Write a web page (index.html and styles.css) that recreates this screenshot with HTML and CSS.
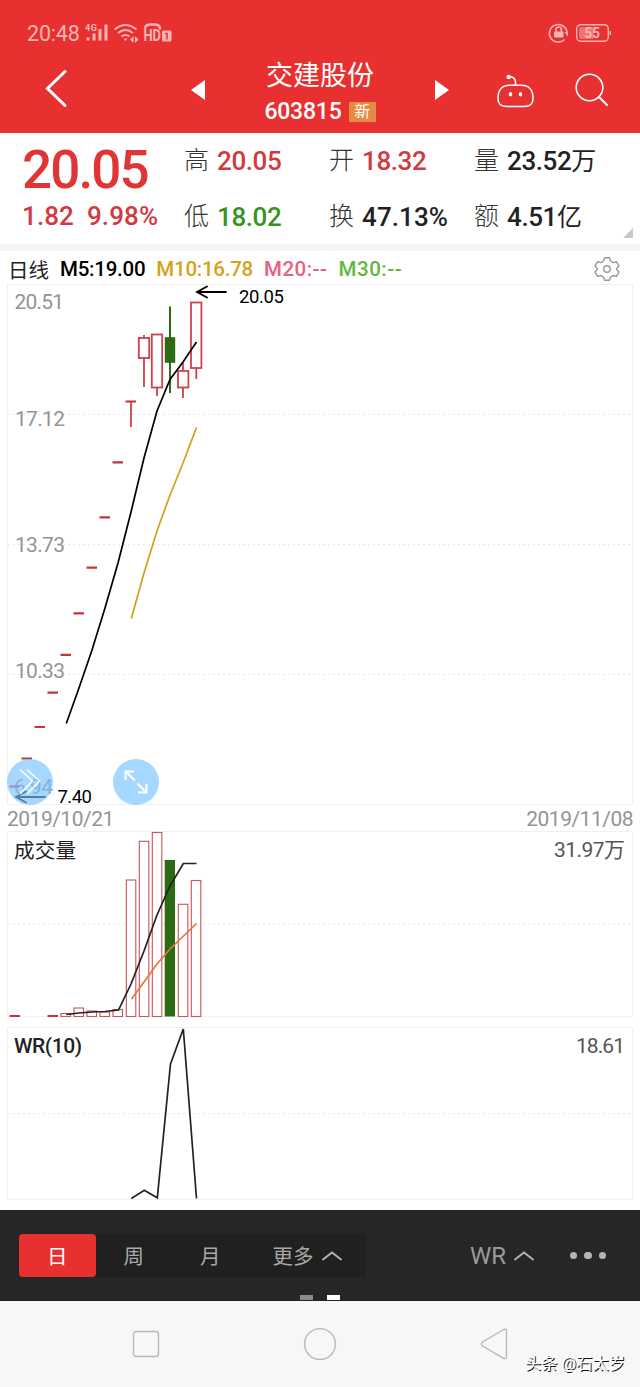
FILE: index.html
```html
<!DOCTYPE html>
<html lang="zh-CN">
<head>
    <meta charset="UTF-8">
    <meta name="viewport" content="width=device-width, initial-scale=1.0">
    <title>交建股份 603815</title>
    <link rel="stylesheet" href="styles.css">
</head>
<body>
<header class="header">
    <div class="status">
        <span class="clock">20:48</span>
        <svg class="signals" width="88" height="22" viewBox="85 22 88 22">
            <text class="sig-4g" x="85" y="30.5" textLength="12">4G</text>
            <path d="M88 37.5v3M94 33.5v7M100 29v11.500M106 24.500v16" stroke="#f9b5b1" stroke-width="3"/>
            <g fill="none" stroke="#f9b5b1" stroke-width="2">
                <path d="M114.500 29.500q11-9 22 0M118 33q7.500-6 15 0M121.500 36.500q4-3 8 0"/>
                <path d="M145 29.500v-1q0-4 6-4h3q6 0 6 4v1" stroke-width="2.400"/>
            </g>
            <path d="M123.500 38.500h4l-2 2.500zM133.500 36v7l-3.500-3.500zM135 36v7l3.500-3.500z" fill="#f9b5b1"/>
            <text class="sig-hd" x="143.500" y="41" textLength="17.500" lengthAdjust="spacingAndGlyphs">HD</text>
            <rect x="162" y="30.500" width="9.500" height="11" rx="1.500" fill="#f9b5b1"/>
            <path d="M165 33.500h2v6" fill="none" stroke="#e93030" stroke-width="1.500"/>
        </svg>
        <svg class="battery" width="66" height="22" viewBox="547 22 66 22">
            <path d="M564.500 39.500a8.800 8.800 0 1 1 2.500-5.500" fill="none" stroke="#f9b5b1" stroke-width="1.600"/>
            <path d="M564.500 32.500l3.500-1v5z" fill="#f9b5b1"/>
            <rect x="554" y="31.500" width="9.500" height="6" rx="1" fill="#f9b5b1"/>
            <path d="M556 32v-2.500q0-2.500 2.700-2.500t2.700 2.500v2.500" fill="none" stroke="#f9b5b1" stroke-width="1.600"/>
            <rect x="576.700" y="24.700" width="31.600" height="16.600" rx="4" fill="none" stroke="#f9b5b1" stroke-width="1.400"/>
            <rect x="579" y="27" width="15" height="12" rx="2" fill="#ef7471"/>
            <path d="M609.500 31h1.500v4h-1.500z" fill="#f9b5b1"/>
            <text class="sig-pct" x="584.500" y="38" textLength="15.500" lengthAdjust="spacingAndGlyphs">55</text>
        </svg>
    </div>
    <div class="titlebar">
        <svg class="back" width="24" height="40" viewBox="44 69 24 40">
            <path d="M65 71.500L47.500 88.500L65 105.500" fill="none" stroke="#fff" stroke-width="3" stroke-linecap="round"/>
        </svg>
        <svg class="prev" width="14" height="20" viewBox="0 0 14 20"><path d="M14 0v20L0 10z" fill="#fff"/></svg>
        <div class="stock">
            <h1 class="stock-name">交建股份</h1>
            <div class="stock-code"><span>603815</span><em class="tag">新</em></div>
        </div>
        <svg class="next" width="14" height="20" viewBox="0 0 14 20"><path d="M0 0v20l14-10z" fill="#fff"/></svg>
        <svg class="robot" width="38" height="36" viewBox="497 73 38 36">
            <g fill="none" stroke="#fff" stroke-width="1.600">
                <path d="M509.500 85.200h12c7.500 0 11.500 5 11.500 13 0 6-2.500 8.300-9 8.300h-17c-6.500 0-9-2.300-9-8.300 0-8 4-13 11.500-13z"/>
                <path d="M515.500 85v-3c0-3.500-2.500-5-6-5.500"/>
            </g>
            <circle cx="508.700" cy="77" r="2.200" fill="#fff"/>
            <ellipse cx="510.500" cy="94.300" rx="1.700" ry="2.200" fill="#fff"/>
            <ellipse cx="520.500" cy="94.300" rx="1.700" ry="2.200" fill="#fff"/>
        </svg>
        <svg class="search" width="36" height="36" viewBox="574 72 36 36">
            <circle cx="589.500" cy="87.500" r="13.300" fill="none" stroke="#fff" stroke-width="1.600"/>
            <path d="M599 97l8 8" stroke="#fff" stroke-width="2" stroke-linecap="round"/>
        </svg>
    </div>
</header>

<section class="quote">
    <div class="last">
        <div class="last-price">20.05</div>
        <div class="last-change"><span>1.82</span><span>9.98%</span></div>
    </div>
    <dl class="figures">
        <div class="figure"><dt>高</dt><dd class="up">20.05</dd></div>
        <div class="figure"><dt>开</dt><dd class="up">18.32</dd></div>
        <div class="figure"><dt>量</dt><dd>23.52<i>万</i></dd></div>
        <div class="figure"><dt>低</dt><dd class="down">18.02</dd></div>
        <div class="figure"><dt>换</dt><dd class="wide">47.13%</dd></div>
        <div class="figure"><dt>额</dt><dd>4.51<i>亿</i></dd></div>
    </dl>
    <span class="corner"></span>
</section>

<section class="charts">
    <div class="legend">
        <span class="period">日线</span>
        <span class="m5">M5:19.00</span>
        <span class="m10">M10:16.78</span>
        <span class="m20">M20:--</span>
        <span class="m30">M30:--</span>
        <svg class="gear" width="26" height="26" viewBox="0 0 26 26" fill="none" stroke="#999" stroke-width="1.400" stroke-linejoin="round">
            <path d="M10.500 1.700h5l1 3.300 2.700 1.600 3.300-.8 2.500 4.300-2.300 2.400v1l2.300 2.500-2.500 4.300-3.300-.8-2.700 1.600-1 3.200h-5l-1-3.200-2.700-1.600-3.300.8L1 16l2.300-2.500v-1L1 10.100l2.500-4.300 3.300.8L9.500 5z"/>
            <circle cx="13" cy="13" r="3.300"/>
        </svg>
    </div>

    <!-- daily candles -->
    <div class="price-chart">
        <svg class="plot" width="640" height="520" viewBox="0 284 640 520">
            <rect class="frame" x="7.500" y="284.500" width="625" height="520"/>
            <path class="grid" d="M8 414.500h624M8 544.500h624M8 674.500h624"/>
            <g class="axis">
                <text x="14.500" y="309" textLength="49.500">20.51</text>
                <text x="15" y="425.500" textLength="50">17.12</text>
                <text x="15" y="551.500" textLength="50">13.73</text>
                <text x="15" y="677.500" textLength="50">10.33</text>
                <text x="14" y="794" textLength="39">6.94</text>
            </g>
            <path class="limit" d="M9.500 786.500h10M21.500 758.500h10.500M34.500 727h10.500M47.500 692.700h10.500M60.500 654.800h10.500M73.500 613.300h10.500M86.500 567.700h10.500M99.500 517.300h10.500M112.500 462.300h10.500M125.500 401.500h10.500"/>
            <g class="candle">
                <path d="M131 402v25M144 335v3M144 358v29M157 388v8M183 363v8M183 388v10M196.300 368v11"/>
                <rect x="138.800" y="338" width="10.400" height="20"/>
                <rect x="151.800" y="334.500" width="10.400" height="53"/>
                <rect x="178" y="371" width="10.400" height="16.500"/>
                <rect x="191" y="302.500" width="10.400" height="65.500"/>
            </g>
            <path d="M170 306.500v86.500" stroke="#2c6a14" stroke-width="2"/>
            <rect x="164.800" y="337.200" width="10.400" height="25.600" fill="#2c6a14"/>
            <polyline class="line" stroke="#000" points="66.300,723.500 79,688 92,650 105,608 118,563 131,512 144,458 157,411 170,379.500 183,362 196.500,342"/>
            <polyline class="line" stroke="#d0a017" points="131.300,618.500 144,573 157,531 170,495 183,463 196.500,427.500"/>
            <path class="arrow" d="M226 292h-28.500M207 286.500l-10 5.500 10 5.500"/>
            <text class="mark" x="239" y="302.500" textLength="45">20.05</text>
            <path class="arrow" d="M45 797h-28.500M26 791.500l-10 5.500 10 5.500"/>
            <text class="mark" x="57.500" y="803" textLength="34.500">7.40</text>
        </svg>
        <button class="float-btn expand">
            <svg width="46" height="46" viewBox="0 0 46 46" fill="none" stroke="#fff" stroke-width="1.500">
                <path d="M13 10.500l12.500 11.500L13 35M20 10.500l12.500 11.500L20 35"/>
            </svg>
        </button>
        <button class="float-btn full">
            <svg width="46" height="46" viewBox="0 0 46 46" fill="none" stroke="#fff" stroke-width="2">
                <path d="M21 12.500h-8.500v8.500M12.500 12.500l9.500 9M33.500 25v8.500H25M24.500 24.500l9 9"/>
            </svg>
        </button>
    </div>
    <div class="dates"><span>2019/10/21</span><span>2019/11/08</span></div>

    <!-- volume -->
    <svg class="plot volume" width="640" height="187" viewBox="0 831 640 187">
        <rect class="frame" x="7.500" y="831.500" width="625" height="185"/>
        <path class="grid" d="M8 924h624"/>
        <text class="plot-title" x="14" y="857.500" textLength="62">成交量</text>
        <text class="plot-value" x="554" y="857" textLength="71">31.97万</text>
        <path class="limit" d="M9.500 1016h10.500M47.500 1016h10.500"/>
        <g class="bar">
            <rect x="61" y="1013.500" width="9.500" height="3"/>
            <rect x="74" y="1008" width="9.500" height="8.500"/>
            <rect x="87" y="1011" width="9.500" height="5.500"/>
            <rect x="100" y="1012" width="9.500" height="4.500"/>
            <rect x="113" y="1009.500" width="9.500" height="7"/>
            <rect x="126.300" y="880" width="9.500" height="136.500"/>
            <rect x="139.300" y="841.300" width="9.500" height="175.200"/>
            <rect x="152.300" y="832.500" width="9.500" height="184"/>
            <rect x="178.300" y="904.300" width="9.500" height="112.200"/>
            <rect x="191.300" y="880.500" width="9.500" height="136"/>
        </g>
        <rect x="164.700" y="860" width="10.300" height="156.500" fill="#2c6a14"/>
        <polyline class="line" stroke="#222" points="66.300,1014.500 79,1013 92,1012 105,1011.500 118.500,1010 131,984 144,951 157,915 170,886 183.300,863.500 196.500,863.500"/>
        <polyline class="line" stroke="#e8743c" points="131.500,999 144,982 157,964 170,949 183,936.500 196.500,923.500"/>
    </svg>

    <!-- williams %R -->
    <svg class="plot wr" width="640" height="174" viewBox="0 1027 640 174">
        <rect class="frame" x="7.500" y="1027.500" width="625" height="172"/>
        <path class="grid" d="M8 1113.500h624"/>
        <text class="plot-title latin" x="14" y="1052.500" textLength="68">WR(10)</text>
        <text class="plot-value" x="576" y="1052.500" textLength="49">18.61</text>
        <polyline class="line" stroke="#222" points="131.300,1198.500 144.300,1190.300 157.300,1197.800 170.500,1064 183.300,1029 196.500,1198.500"/>
    </svg>
</section>

<nav class="toolbar">
    <div class="periods">
        <a class="tab active">日</a>
        <a class="tab">周</a>
        <a class="tab">月</a>
        <a class="tab more"><span>更多</span><svg class="caret" width="20" height="10" viewBox="0 0 20 10"><path d="M1 8.500l9-7 9 7"/></svg></a>
    </div>
    <a class="indicator">WR<svg class="caret" width="20" height="10" viewBox="0 0 20 10"><path d="M1 8.500l9-7 9 7"/></svg></a>
    <div class="dots"><i></i><i></i><i></i></div>
    <div class="pager"><i></i><i class="on"></i></div>
</nav>

<footer class="sysbar">
    <svg width="28" height="28" viewBox="0 0 28 28"><rect x="1.500" y="1.500" width="25" height="25" rx="2.500"/></svg>
    <svg width="34" height="34" viewBox="0 0 34 34"><circle cx="17" cy="17" r="15.400"/></svg>
    <svg width="28" height="32" viewBox="0 0 28 32"><path d="M23.500 1.500L2.700 14q-2.400 2 0 4l20.800 12.300q3 1 3-2v-25q0-2.800-3-1.800z"/></svg>
    <span class="watermark">头条 @石太岁</span>
</footer>
</body>
</html>
```
FILE: styles.css
```css
* {
    box-sizing: border-box;
}

body {
    margin: 0;
    width: 640px;
    height: 1387px;
    overflow: hidden;
    display: flex;
    flex-direction: column;
    background: #fff;
    font-family: Roboto, "Noto Sans CJK SC", sans-serif;
    color: #222;
}

svg {
    display: block;
    flex: none;
}

/* header */
.header {
    height: 133px;
    background: #e93030;
    color: #fff;
}

.status {
    height: 60px;
    display: flex;
    align-items: center;
    padding: 6px 27px 0 27px;
    color: #f9b5b1;
}

.clock {
    width: 58px;
    padding-top: 1px;
    font-size: 21.5px;
    letter-spacing: -0.2px;
}

.battery {
    margin-left: auto;
}

.sig-4g {
    font-size: 9px;
    font-weight: 700;
    fill: #f9b5b1;
}

.sig-hd {
    font-size: 16px;
    font-weight: 700;
    fill: #f9b5b1;
}

.sig-pct {
    font-size: 14px;
    font-weight: 700;
    fill: #f9b5b1;
}

.titlebar {
    height: 73px;
    display: flex;
    align-items: flex-start;
    padding-left: 44px;
}

.back {
    margin-top: 9px;
}

.prev {
    margin: 20px 0 0 123px;
}

.stock {
    width: 230px;
    display: flex;
    flex-direction: column;
    align-items: center;
}

.stock-name {
    margin: 0;
    font-size: 27px;
    line-height: 32px;
    font-weight: 400;
}

.stock-code {
    display: flex;
    align-items: center;
    gap: 7px;
    height: 39px;
    font-size: 23px;
    font-weight: 500;
    letter-spacing: -0.2px;
}

.tag {
    width: 27px;
    height: 20px;
    line-height: 19px;
    background: #e58a45;
    font-size: 16px;
    font-style: normal;
    font-weight: 400;
    text-align: center;
}

.next {
    margin-top: 20px;
}

.robot {
    margin: 13px 0 0 48px;
}

.search {
    margin: 12px 0 0 39px;
}

/* quote */
.quote {
    position: relative;
    height: 118px;
    display: flex;
    padding: 9px 0 0 22px;
    border-bottom: 7px solid #f5f5f5;
}

.last {
    width: 162px;
    color: #e13434;
}

.last-price {
    font-size: 53px;
    line-height: 56px;
    font-weight: 500;
    letter-spacing: -1.9px;
}

.last-change {
    display: flex;
    gap: 13px;
    font-size: 26px;
    line-height: 37px;
    font-weight: 500;
    color: #d13a40;
    letter-spacing: 0.1px;
}

.figures {
    margin: 0;
    display: grid;
    grid-template-columns: 145px 145px 150px;
    grid-template-rows: 37px 37px;
    row-gap: 19px;
}

.figure {
    display: flex;
    align-items: center;
    gap: 8px;
    white-space: nowrap;
}

.figure dt {
    font-size: 25px;
    line-height: 37px;
    font-weight: 300;
    width: 25px;
    color: #333;
}

.figure dd {
    margin: 0;
    font-size: 26px;
    line-height: 36px;
    font-weight: 500;
    letter-spacing: -0.4px;
}

.figure .wide {
    letter-spacing: 0.1px;
}

.figure i {
    font-style: normal;
    font-weight: 400;
    font-size: 25px;
    line-height: 1;
}

.figure .up {
    color: #d13a40;
}

.figure .down {
    color: #38921f;
}

.corner {
    position: absolute;
    right: 7px;
    bottom: 6px;
    border-left: 10px solid transparent;
    border-bottom: 10px solid #c8c8c8;
}

/* charts */
.charts {
    height: 959px;
}

.legend {
    height: 33px;
    display: flex;
    align-items: center;
    gap: 11px;
    padding: 2px 20px 0 8px;
    font-size: 20.5px;
    font-weight: 500;
    letter-spacing: -0.25px;
    white-space: nowrap;
}

.period {
    font-weight: 400;
    letter-spacing: 0;
}

.m5 {
    color: #000;
}

.m10 {
    color: #d6a11c;
}

.m20 {
    color: #e5637f;
    letter-spacing: 0.5px;
}

.m30 {
    color: #62b73c;
    letter-spacing: 0.5px;
}

.gear {
    margin-left: auto;
}

.price-chart {
    position: relative;
    height: 520px;
}

.plot {
    overflow: visible;
}

.frame {
    fill: none;
    stroke: #f0f0f0;
}

.grid {
    stroke: #e6e6e6;
    stroke-dasharray: 2 3;
}

.axis {
    font-size: 21px;
    fill: #949494;
}

.limit {
    stroke: #c5343b;
    stroke-width: 2.2;
}

.candle {
    fill: #fff;
    stroke: #cf4249;
    stroke-width: 1.8;
}

.bar {
    fill: #fff;
    stroke: #c9545a;
    stroke-width: 1.1;
}

.line {
    fill: none;
    stroke-width: 1.7;
}

.arrow {
    fill: none;
    stroke: #000;
    stroke-width: 1.8;
    stroke-linecap: round;
}

.mark {
    font-size: 18.5px;
    fill: #000;
}

.float-btn {
    position: absolute;
    top: 475px;
    width: 46px;
    height: 46px;
    padding: 0;
    border: 0;
    border-radius: 50%;
    background: rgba(120, 196, 255, 0.66);
}

.expand {
    left: 7px;
}

.full {
    left: 113px;
}

.dates {
    height: 27px;
    display: flex;
    justify-content: space-between;
    padding: 2px 7px 0 7px;
    font-size: 21px;
    line-height: 27px;
    letter-spacing: -0.5px;
    color: #949494;
}

.wr {
    margin-top: 9px;
}

.plot-title {
    font-size: 20.6px;
    fill: #222;
}

.plot-title.latin {
    font-size: 21px;
    font-weight: 500;
}

.plot-value {
    font-size: 21px;
    fill: #555;
}

/* toolbar */
.toolbar {
    position: relative;
    height: 91px;
    flex: none;
    display: flex;
    align-items: center;
    padding: 0 34px 0 19px;
    background: #262626;
    color: #a8a8a8;
    font-size: 20.5px;
}

.periods {
    display: flex;
    width: 347px;
    height: 43px;
    border-radius: 4px;
    background: #202020;
}

.tab {
    width: 76.5px;
    height: 43px;
    line-height: 47px;
    text-align: center;
}

.tab.active {
    border-radius: 4px;
    background: #e93030;
    color: #fff;
}

.tab.more {
    width: 117px;
    display: flex;
    align-items: center;
    justify-content: center;
    gap: 8px;
}

.tab.more span {
    padding-top: 4px;
}

.caret {
    fill: none;
    stroke: #b5b5b5;
    stroke-width: 1.8;
    stroke-linecap: round;
}

.indicator {
    display: flex;
    align-items: center;
    gap: 8px;
    margin-left: 104px;
    font-size: 24px;
    color: #999;
}

.dots {
    display: flex;
    gap: 7px;
    margin-left: auto;
}

.dots i {
    width: 7.5px;
    height: 7.5px;
    border-radius: 50%;
    background: #b5b5b5;
}

.pager {
    position: absolute;
    left: 300px;
    bottom: 1px;
    display: flex;
    gap: 14px;
}

.pager i {
    width: 13px;
    height: 5px;
    background: #8a8a8a;
}

.pager .on {
    background: #fff;
}

/* system keys */
.sysbar {
    position: relative;
    height: 86px;
    flex: none;
    display: flex;
    align-items: center;
    justify-content: space-between;
    padding: 0 132px;
    background: #f7f7f7;
}

.sysbar svg {
    fill: none;
    stroke: #b8b8b8;
    stroke-width: 1.4;
}

.watermark {
    position: absolute;
    right: 15px;
    bottom: 11px;
    font-size: 16.3px;
    line-height: 24px;
    color: #fff;
    text-shadow: 1px 1px 0 #111;
    white-space: nowrap;
}
```
